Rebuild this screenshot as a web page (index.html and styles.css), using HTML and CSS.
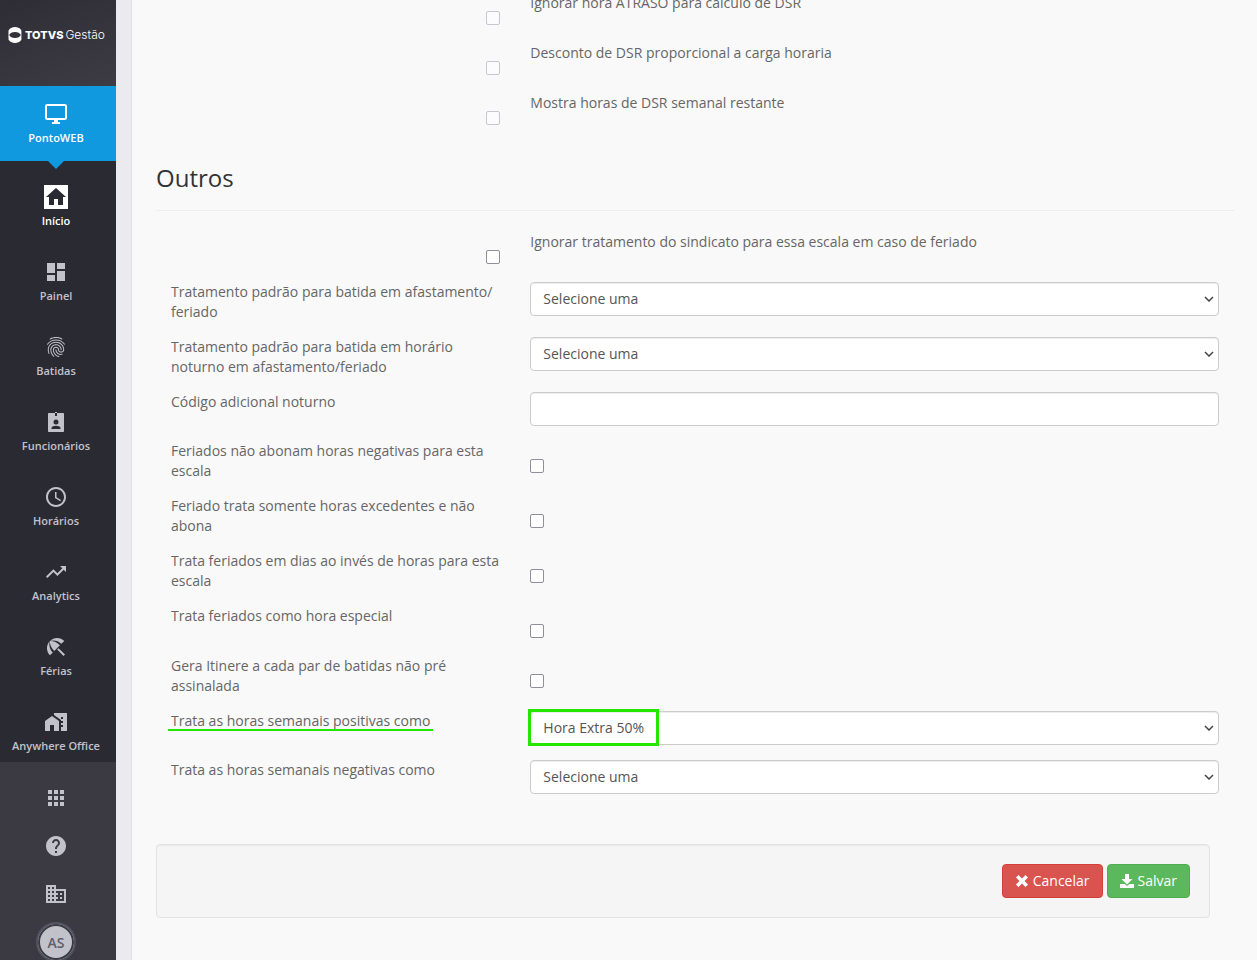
FILE: index.html
```html
<!DOCTYPE html>
<html lang="pt-BR">
<head>
  <meta charset="utf-8">
  <meta name="viewport" content="width=device-width, initial-scale=1.0">
  <title>TOTVS Gestão - PontoWEB</title>
  <link rel="stylesheet" href="styles.css">
</head>

<body>
  <aside class="sidebar">
    <div class="logo">
      <svg class="logo-mark" viewBox="0 0 14 16">
        <path fill-rule="evenodd" d="M7 0c2.500 0 4.700 1 6 2.700.3.400.4.800.4 1.300v8c0 .5-.1.900-.4 1.300C11.700 15 9.500 16 7 16s-4.700-1-6-2.700c-.3-.4-.5-.8-.5-1.300V4c0-.5.2-.9.5-1.300C2.300 1 4.500 0 7 0zM7 5C4 5 2 6 1.200 8 2 10 4 11 7 11s5-1 5.800-3C12 6 10 5 7 5z"/>
      </svg>
      <span class="logo-name">TOTVS</span>
      <span class="logo-product">Gestão</span>
    </div>

    <a class="item active" href="#">
      <svg viewBox="0 0 24 24"><path d="M21 2H3c-1.100 0-2 .9-2 2v12c0 1.100.9 2 2 2h7v2H8v2h8v-2h-2v-2h7c1.100 0 2-.9 2-2V4c0-1.100-.9-2-2-2zm0 14H3V4h18v12z"/></svg>
      <span>PontoWEB</span>
    </a>

    <nav class="menu">
      <a class="item current" href="#">
        <svg viewBox="0 0 24 24"><path fill-rule="evenodd" d="M0 0h24v24H0zM12 3L2 12h3v8h5v-6h4v6h5v-8h3z"/></svg>
        <span>Início</span>
      </a>
      <a class="item" href="#">
        <svg viewBox="0 0 24 24"><path d="M3 13h8V3H3v10zm0 8h8v-6H3v6zm10 0h8V11h-8v10zm0-18v6h8V3h-8z"/></svg>
        <span>Painel</span>
      </a>
      <a class="item" href="#">
        <svg viewBox="0 0 24 24"><path d="M17.810 4.470c-.08 0-.16-.02-.23-.06C15.660 3.420 14 3 12.010 3c-1.980 0-3.860.47-5.570 1.410-.24.13-.54.04-.68-.2-.13-.24-.04-.55.2-.68C7.820 2.520 9.860 2 12.010 2c2.130 0 3.990.47 6.030 1.520.25.13.34.43.21.67-.09.18-.26.28-.44.28zM3.500 9.720c-.1 0-.2-.03-.29-.09-.23-.16-.28-.47-.12-.7.99-1.400 2.250-2.500 3.750-3.270C9.980 4.040 14 4.030 17.150 5.650c1.500.77 2.760 1.860 3.750 3.250.16.22.11.54-.12.7-.23.16-.54.11-.7-.12-.9-1.260-2.040-2.250-3.390-2.940-2.870-1.470-6.540-1.470-9.400.01-1.360.7-2.500 1.700-3.400 2.960-.08.14-.23.21-.39.21zm6.250 12.070c-.13 0-.26-.05-.35-.15-.87-.87-1.340-1.430-2.010-2.640-.69-1.230-1.050-2.730-1.050-4.340 0-2.970 2.540-5.390 5.660-5.390s5.660 2.420 5.660 5.390c0 .28-.22.5-.5.5s-.5-.22-.5-.5c0-2.420-2.090-4.390-4.660-4.390-2.570 0-4.660 1.970-4.660 4.390 0 1.440.32 2.770.93 3.850.64 1.150 1.080 1.640 1.850 2.420.19.2.19.51 0 .71-.11.1-.24.15-.37.15zm7.170-1.850c-1.190 0-2.240-.3-3.100-.89-1.490-1.010-2.380-2.650-2.380-4.390 0-.28.22-.5.5-.5s.5.22.5.5c0 1.410.72 2.740 1.940 3.560.71.48 1.540.71 2.540.71.24 0 .64-.03 1.040-.1.27-.05.53.13.58.41.05.27-.13.53-.41.58-.57.11-1.070.12-1.210.12zM14.910 22c-.04 0-.09-.01-.13-.02-1.590-.44-2.630-1.030-3.720-2.100-1.400-1.390-2.170-3.240-2.170-5.220 0-1.620 1.380-2.940 3.080-2.940 1.700 0 3.080 1.320 3.080 2.940 0 1.070.93 1.940 2.080 1.940s2.080-.87 2.080-1.940c0-3.770-3.250-6.830-7.250-6.830-2.840 0-5.440 1.580-6.610 4.030-.39.81-.59 1.760-.59 2.800 0 .78.07 2.010.67 3.610.1.26-.03.55-.29.64-.26.1-.55-.04-.64-.29-.49-1.310-.73-2.610-.73-3.960 0-1.200.23-2.290.68-3.240 1.330-2.790 4.280-4.600 7.510-4.600 4.550 0 8.250 3.510 8.250 7.830 0 1.620-1.380 2.940-3.080 2.940s-3.080-1.320-3.080-2.940c0-1.070-.93-1.940-2.080-1.940s-2.080.87-2.080 1.940c0 1.710.66 3.310 1.870 4.510.95.94 1.860 1.460 3.270 1.850.27.07.42.35.35.61-.05.23-.26.38-.47.38z"/></svg>
        <span>Batidas</span>
      </a>
      <a class="item" href="#">
        <svg viewBox="0 0 24 24"><path fill-rule="evenodd" d="M5 3h6V2h2v1h6c.6 0 1 .4 1 1v17c0 .6-.4 1-1 1H5c-.6 0-1-.4-1-1V4c0-.6.4-1 1-1zm6 0v3h2V3zm1 6.500a2.500 2.500 0 1 0 0 5 2.500 2.500 0 0 0 0-5zM7.500 19h9v-1c0-1.400-2.500-2.200-4.500-2.200s-4.500.8-4.500 2.200z"/></svg>
        <span>Funcionários</span>
      </a>
      <a class="item" href="#">
        <svg viewBox="0 0 24 24"><path d="M11.990 2C6.470 2 2 6.480 2 12s4.470 10 9.990 10C17.520 22 22 17.520 22 12S17.520 2 11.990 2zM12 20c-4.420 0-8-3.580-8-8s3.580-8 8-8 8 3.580 8 8-3.580 8-8 8zm.5-13H11v6l5.250 3.150.75-1.230-4.500-2.670z"/></svg>
        <span>Horários</span>
      </a>
      <a class="item" href="#">
        <svg viewBox="0 0 24 24"><path d="M16 6l2.290 2.290-4.880 4.880-4-4L2 16.590 3.410 18l6-6 4 4 6.300-6.290L22 12V6z"/></svg>
        <span>Analytics</span>
      </a>
      <a class="item" href="#">
        <svg viewBox="0 0 24 24"><path d="M13.127 14.560l1.430-1.430 6.440 6.443L19.570 21zm4.293-5.730l2.860-2.860c-3.950-3.950-10.350-3.960-14.300-.02 3.930-1.300 8.310-.25 11.440 2.880zM5.950 5.980c-3.940 3.950-3.930 10.350.02 14.300l2.860-2.860C5.700 14.290 4.650 9.910 5.950 5.980zm.02-.02l-.01.01c-.38 3.010 1.170 6.880 4.300 10.020l5.730-5.730c-3.130-3.130-7.010-4.680-10.020-4.300z"/></svg>
        <span>Férias</span>
      </a>
      <a class="item" href="#">
        <svg viewBox="0 0 24 24"><path d="M1 11v10h5v-6h4v6h5V11L8 6z"/><path d="M10 3v1.970l7 5V11h2v2h-2v2h2v2h-2v4h6V3H10zm9 6h-2V7h2v2z"/></svg>
        <span>Anywhere Office</span>
      </a>
    </nav>

    <div class="tools">
      <a href="#" aria-label="Aplicativos">
        <svg viewBox="0 0 24 24"><path d="M4 8h4V4H4v4zm6 12h4v-4h-4v4zm-6 0h4v-4H4v4zm0-6h4v-4H4v4zm6 0h4v-4h-4v4zm6-10v4h4V4h-4zm-6 4h4V4h-4v4zm6 6h4v-4h-4v4zm0 6h4v-4h-4v4z"/></svg>
      </a>
      <a href="#" aria-label="Ajuda">
        <svg viewBox="0 0 24 24"><path d="M12 2C6.480 2 2 6.480 2 12s4.480 10 10 10 10-4.480 10-10S17.520 2 12 2zm1 17h-2v-2h2v2zm2.070-7.750l-.9.920C13.450 12.900 13 13.500 13 15h-2v-.5c0-1.100.45-2.100 1.170-2.830l1.240-1.260c.37-.36.59-.86.59-1.410 0-1.100-.9-2-2-2s-2 .9-2 2H8c0-2.210 1.790-4 4-4s4 1.790 4 4c0 .88-.36 1.680-.93 2.250z"/></svg>
      </a>
      <a href="#" aria-label="Empresa">
        <svg viewBox="0 0 24 24"><path d="M12 7V3H2v18h20V7H12zM6 19H4v-2h2v2zm0-4H4v-2h2v2zm0-4H4V9h2v2zm0-4H4V5h2v2zm4 12H8v-2h2v2zm0-4H8v-2h2v2zm0-4H8V9h2v2zm0-4H8V5h2v2zm10 12h-8v-2h2v-2h-2v-2h2v-2h-2V9h8v10zm-2-8h-2v2h2v-2zm0 4h-2v2h2v-2z"/></svg>
      </a>
      <a href="#"><span class="avatar">AS</span></a>
    </div>
  </aside>

  <main class="content">
    <form>
      <div class="row flipped">
        <label for="atraso">Ignorar hora ATRASO para calculo de DSR</label>
        <div class="control"><input type="checkbox" id="atraso" disabled></div>
      </div>
      <div class="row flipped">
        <label for="desconto">Desconto de DSR proporcional a carga horaria</label>
        <div class="control"><input type="checkbox" id="desconto" disabled></div>
      </div>
      <div class="row flipped">
        <label for="mostra">Mostra horas de DSR semanal restante</label>
        <div class="control"><input type="checkbox" id="mostra" disabled></div>
      </div>

      <h2>Outros</h2>

      <div class="row flipped">
        <label for="sindicato">Ignorar tratamento do sindicato para essa escala em caso de feriado</label>
        <div class="control"><input type="checkbox" id="sindicato"></div>
      </div>
      <div class="row">
        <label for="afastamento">Tratamento padrão para batida em afastamento/<wbr>feriado</label>
        <div class="control">
          <select id="afastamento"><option>Selecione uma</option></select>
        </div>
      </div>
      <div class="row">
        <label for="noturno">Tratamento padrão para batida em horário noturno em afastamento/feriado</label>
        <div class="control">
          <select id="noturno"><option>Selecione uma</option></select>
        </div>
      </div>
      <div class="row">
        <label for="codigo">Código adicional noturno</label>
        <div class="control"><input type="text" id="codigo"></div>
      </div>
      <div class="row">
        <label for="abonam">Feriados não abonam horas negativas para esta escala</label>
        <div class="control"><input type="checkbox" id="abonam"></div>
      </div>
      <div class="row">
        <label for="excedentes">Feriado trata somente horas excedentes e não abona</label>
        <div class="control"><input type="checkbox" id="excedentes"></div>
      </div>
      <div class="row">
        <label for="dias">Trata feriados em dias ao invés de horas para esta escala</label>
        <div class="control"><input type="checkbox" id="dias"></div>
      </div>
      <div class="row">
        <label for="especial">Trata feriados como hora especial</label>
        <div class="control"><input type="checkbox" id="especial"></div>
      </div>
      <div class="row">
        <label for="itinere">Gera Itinere a cada par de batidas não pré assinalada</label>
        <div class="control"><input type="checkbox" id="itinere"></div>
      </div>
      <div class="row">
        <label for="positivas"><span class="underlined">Trata as horas semanais positivas como</span></label>
        <div class="control highlighted">
          <select id="positivas"><option>Hora Extra 50%</option><option>Selecione uma</option></select>
        </div>
      </div>
      <div class="row">
        <label for="negativas">Trata as horas semanais negativas como</label>
        <div class="control">
          <select id="negativas"><option>Selecione uma</option></select>
        </div>
      </div>

      <div class="well">
        <button type="button" class="btn btn-danger">
          <svg viewBox="0 0 14 14"><path d="M3.500 1L7 4.500 10.500 1 13 3.500 9.500 7l3.500 3.500-2.500 2.500L7 9.500 3.500 13 1 10.500 4.500 7 1 3.500z"/></svg>
          Cancelar
        </button>
        <button type="submit" class="btn btn-success">
          <svg viewBox="0 0 14 14"><path d="M5 0h4v5h3.500L7 10.500 1.500 5H5zM0 10h4.500L7 12l2.500-2H14v4H0z"/></svg>
          Salvar
        </button>
      </div>
    </form>
  </main>
</body>
</html>
```

FILE: styles.css
```css
*,
*::after {
  box-sizing: border-box;
}

body {
  margin: 0;
  display: flex;
  height: 100vh;
  overflow: hidden;
  background: #ebebef;
  font-family: "Open Sans", sans-serif;
  font-size: 14px;
  line-height: 20px;
  color: #666;
}

/* sidebar */
.sidebar {
  flex: 0 0 116px;
  display: flex;
  flex-direction: column;
  overflow: hidden;
  background: #3b3a43;
  margin-right: 15px;
}

.sidebar svg {
  width: 24px;
  height: 24px;
  fill: #c2c2cb;
}

.logo {
  flex: 0 0 86px;
  display: flex;
  align-items: center;
  padding: 0 0 16px 8px;
  background: linear-gradient(160deg, #2e2d35, #3d3c45);
  color: #fff;
  font-family: Inter, sans-serif;
  font-size: 11px;
}

.sidebar .logo-mark {
  width: 14px;
  height: 16px;
  margin-right: 3px;
  fill: #fff;
}

.logo-name {
  font-weight: 800;
  margin-right: 2px;
}

.logo-product {
  font-size: 12px;
  font-weight: 300;
}

.item {
  flex: 0 0 75px;
  display: flex;
  flex-direction: column;
  align-items: center;
  gap: 2px;
  padding: 16px 4px 0 0;
  color: #c2c2cb;
  font-size: 11px;
  font-weight: 600;
  text-decoration: none;
  white-space: nowrap;
}

.item.active {
  position: relative;
  background: #1199e0;
  color: #fff;
}

.item.active::after {
  content: "";
  position: absolute;
  top: 100%;
  left: 48px;
  border: 8px solid transparent;
  border-top-color: #1199e0;
  border-bottom: 0;
}

.item.current {
  color: #fff;
}

.sidebar .active svg,
.sidebar .current svg {
  fill: #fff;
}

.menu {
  flex: 1;
  display: flex;
  flex-direction: column;
  overflow: hidden;
  padding-top: 8px;
  background: #2a2a32;
}

.tools {
  flex: none;
  padding-top: 12px;
  margin-bottom: -6px;
}

.tools a {
  display: flex;
  align-items: center;
  justify-content: center;
  height: 48px;
  padding-right: 4px;
  text-decoration: none;
}

.avatar {
  width: 40px;
  height: 40px;
  border: 2px solid #53525f;
  border-radius: 50%;
  box-shadow: inset 0 0 0 2px #3b3a43;
  background: #c2c2cb;
  color: #5f5e6b;
  font-weight: 600;
  line-height: 37px;
  text-align: center;
}

/* form */
.content {
  flex: 1;
  overflow: hidden;
  padding: 0 23px 0 24px;
  border-left: 1px solid #e0e0e3;
  background: #f9f9f9;
}

form {
  margin-top: -7px;
}

h2 {
  margin: 0 0 21px;
  padding: 19px 0 17px;
  border-bottom: 1px solid #ededed;
  color: #333;
  font-size: 24px;
  font-weight: 400;
  line-height: 31px;
}

.row {
  display: grid;
  grid-template-columns: 1fr 2fr;
  align-items: start;
  margin-bottom: 15px;
}

.row label,
.control {
  padding: 0 15px;
}

/* checkbox on the left, text on the right */
.flipped label {
  order: 2;
}

.flipped .control {
  text-align: right;
}

input[type="checkbox"] {
  appearance: none;
  display: inline-block;
  vertical-align: top;
  width: 14px;
  height: 14px;
  margin: 18px 0 3px;
  border: 1px solid #8f8f9d;
  border-radius: 2px;
  background: #fff;
}

input[type="checkbox"]:checked {
  background: #1199e0;
}

input[type="checkbox"]:disabled {
  border-color: #c7c7cd;
  background: #fcfcfc;
}

select,
input[type="text"] {
  display: block;
  width: 100%;
  height: 34px;
  padding: 6px 12px;
  border: 1px solid #ccc;
  border-radius: 4px;
  background: #fff;
  box-shadow: inset 0 1px 1px rgba(0, 0, 0, 0.075);
  color: #555;
  font: inherit;
}

select {
  appearance: none;
  background: #fff url("data:image/svg+xml,%3Csvg xmlns='http://www.w3.org/2000/svg' width='10' height='6'%3E%3Cpath d='M1 1l4 4 4-4' fill='none' stroke='%23444' stroke-width='1.5'/%3E%3C/svg%3E") no-repeat right 4px center;
}

.underlined,
.highlighted {
  position: relative;
}

.underlined::after {
  content: "";
  position: absolute;
  left: -3px;
  right: -3px;
  bottom: -1px;
  height: 2px;
  background: #24e600;
}

.highlighted::after {
  content: "";
  position: absolute;
  top: -2px;
  left: 13px;
  width: 131px;
  height: 37px;
  border: 3px solid #24e600;
  pointer-events: none;
}

.well {
  display: flex;
  justify-content: flex-end;
  gap: 4px;
  margin: 50px 24px 20px 0;
  padding: 19px;
  border: 1px solid #e3e3e3;
  border-radius: 4px;
  background: #f5f5f5;
  box-shadow: inset 0 1px 1px rgba(0, 0, 0, 0.05);
}

.btn {
  display: flex;
  align-items: center;
  gap: 4px;
  height: 34px;
  padding: 0 12px;
  border: 1px solid;
  border-radius: 4px;
  color: #fff;
  font: inherit;
  cursor: pointer;
}

.btn svg {
  width: 14px;
  height: 14px;
  fill: #fff;
}

.btn-danger {
  background: #d9534f;
  border-color: #d43f3a;
}

.btn-success {
  background: #5cb85c;
  border-color: #4cae4c;
}
```
